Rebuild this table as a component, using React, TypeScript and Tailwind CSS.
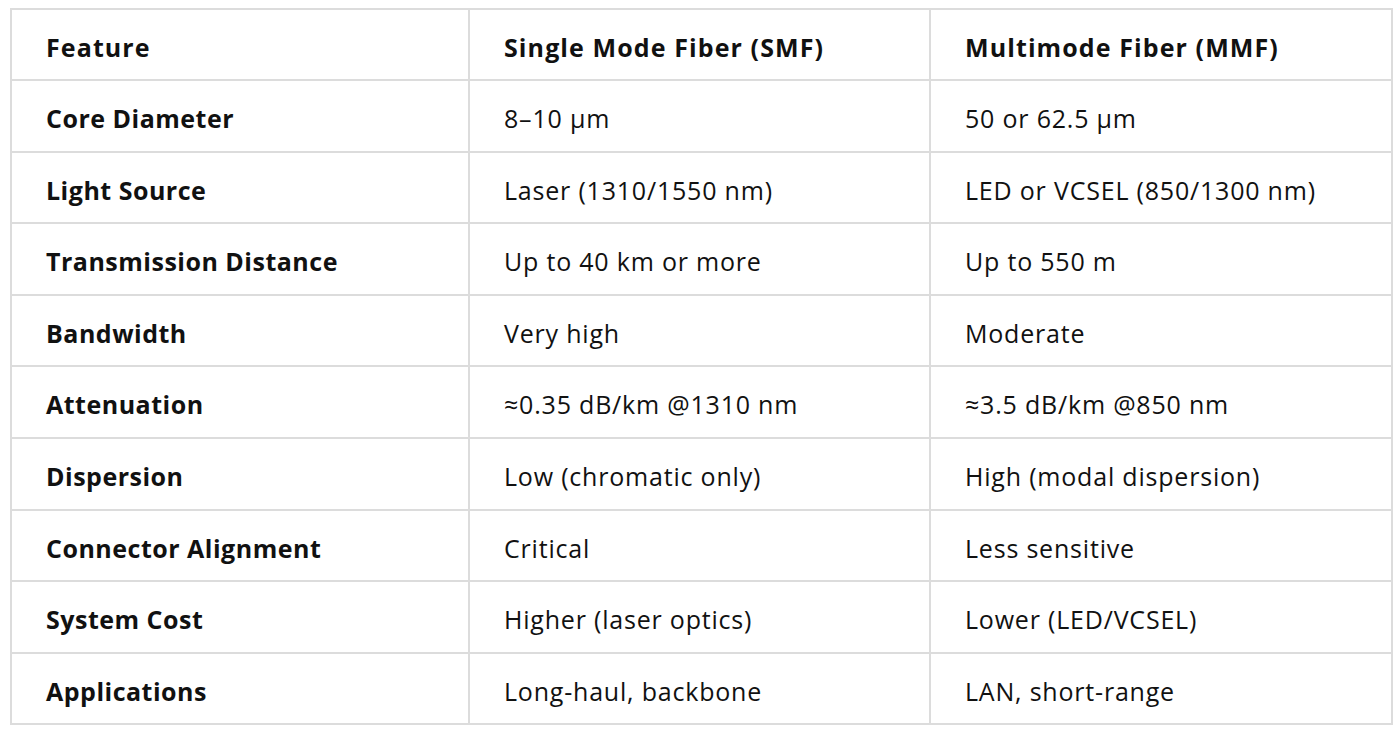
const rows: [string, string, string][] = [
  ['Core Diameter', '8–10 µm', '50 or 62.5 µm'],
  ['Light Source', 'Laser (1310/1550 nm)', 'LED or VCSEL (850/1300 nm)'],
  ['Transmission Distance', 'Up to 40 km or more', 'Up to 550 m'],
  ['Bandwidth', 'Very high', 'Moderate'],
  ['Attenuation', '≈0.35 dB/km @1310 nm', '≈3.5 dB/km @850 nm'],
  ['Dispersion', 'Low (chromatic only)', 'High (modal dispersion)'],
  ['Connector Alignment', 'Critical', 'Less sensitive'],
  ['System Cost', 'Higher (laser optics)', 'Lower (LED/VCSEL)'],
  ['Applications', 'Long-haul, backbone', 'LAN, short-range'],
];

const cell = 'border-2 border-[#dcdcdc] pl-[34px] pt-[6px] text-left align-middle';
const head = 'font-bold tracking-[1.1px]';
const bold = 'font-bold tracking-[0.5px]';
const normal = 'font-normal tracking-[0.8px]';

export default function App() {
  return (
    <div className="w-[1400px] h-[735px] bg-white pl-[10px] pt-[8px] font-['Open_Sans','Noto_Sans',sans-serif] text-[#111] text-[25px]">
      <table className="w-[1381px] border-collapse table-fixed">
        <colgroup>
          <col className="w-[458px]" />
          <col className="w-[461px]" />
          <col className="w-[462px]" />
        </colgroup>
        <thead>
          <tr className="h-[71px]">
            <th className={`${cell} ${head}`}>Feature</th>
            <th className={`${cell} ${head}`}>Single Mode Fiber (SMF)</th>
            <th className={`${cell} ${head}`}>Multimode Fiber (MMF)</th>
          </tr>
        </thead>
        <tbody>
          {rows.map((r) => (
            <tr key={r[0]} className="h-[71.6px]">
              <td className={`${cell} ${bold}`}>{r[0]}</td>
              <td className={`${cell} ${normal}`}>{r[1]}</td>
              <td className={`${cell} ${normal}`}>{r[2]}</td>
            </tr>
          ))}
        </tbody>
      </table>
    </div>
  );
}
